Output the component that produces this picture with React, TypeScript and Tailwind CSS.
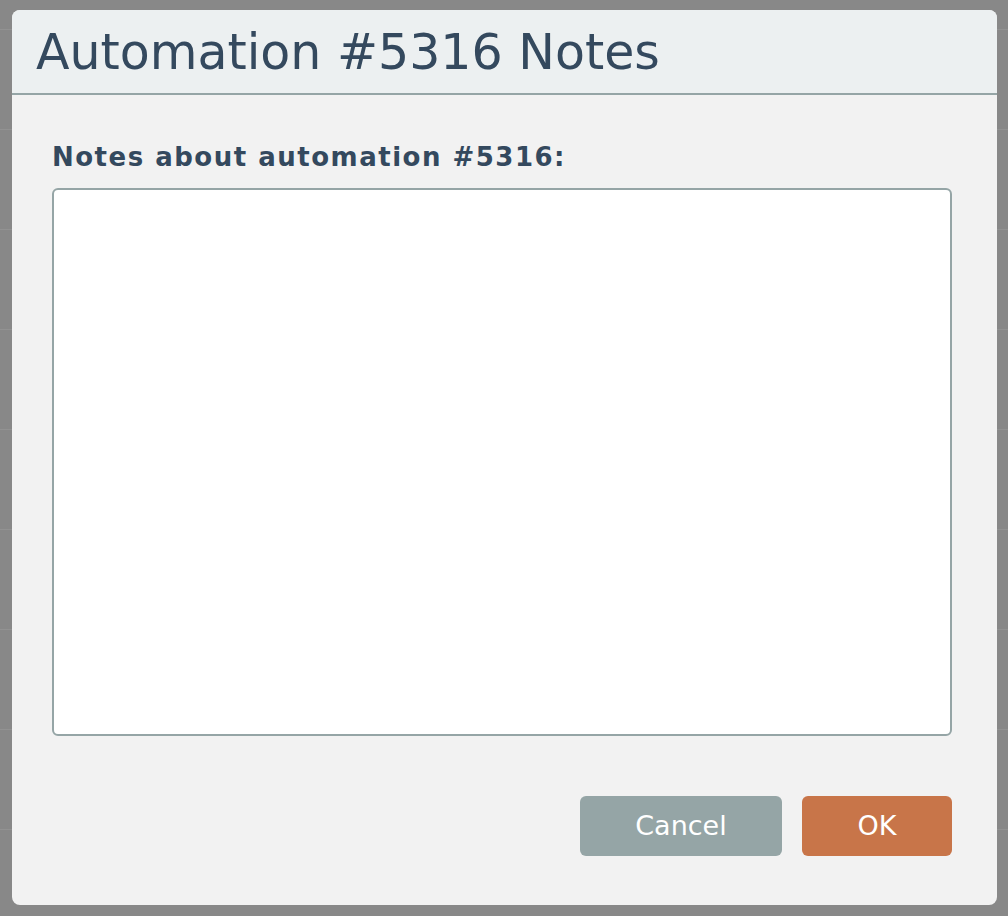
import { useState } from "react";

const rows = Array.from({ length: 9 });

export default function App() {
  const [notes, setNotes] = useState("");

  return (
    <div
      className="relative h-[916px] w-[1008px] overflow-hidden bg-[#888888]"
      style={{ fontFamily: '"DejaVu Sans", Verdana, sans-serif' }}
    >
      {/* page behind the overlay */}
      <div className="pt-[29px]">
        {rows.map((_, i) => (
          <div key={i} className="h-[100px] border-t border-[#929292]" />
        ))}
      </div>

      <div className="absolute inset-0 pl-[12px] pt-[10px]">
        <div className="flex h-[895px] w-[985px] flex-col overflow-hidden rounded-[8px] bg-[#f2f2f2]">
          <div className="flex h-[85px] items-center border-b-2 border-[#95a5a6] bg-[#ecf0f1] pl-6">
            <h1 className="pt-[2px] text-[49px] leading-none text-[#34495e]">Automation #5316 Notes</h1>
          </div>

          <div className="flex flex-1 flex-col pl-[40px] pr-[45px] pt-[48px]">
            <label
              htmlFor="notes"
              className="mb-[16px] h-[29px] text-[26px] font-bold leading-[29px] tracking-[1.5px] text-[#34495e]"
            >
              Notes about automation #5316:
            </label>
            <textarea
              id="notes"
              value={notes}
              onChange={(e) => setNotes(e.target.value)}
              className="h-[548px] w-full resize-none rounded-[6px] border-2 border-[#95a5a6] bg-white p-3 text-[20px] text-[#34495e] outline-none"
            />

            <div className="mt-[60px] flex justify-end gap-[20px]">
              <button className="h-[60px] w-[202px] rounded-[6px] bg-[#95a5a6] text-[27px] text-white">
                Cancel
              </button>
              <button className="h-[60px] w-[150px] rounded-[6px] bg-[#c87549] text-[27px] text-white">
                OK
              </button>
            </div>
          </div>
        </div>
      </div>
    </div>
  );
}
